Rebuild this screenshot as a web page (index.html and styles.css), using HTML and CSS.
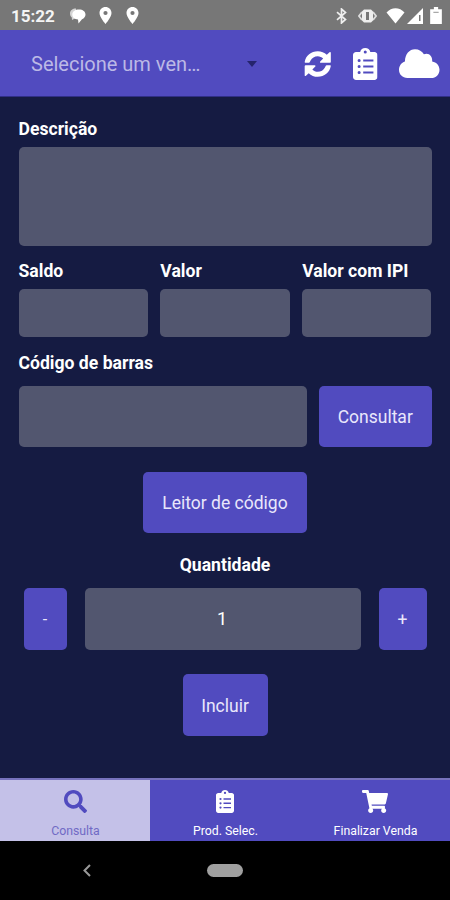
FILE: index.html
```html
<!DOCTYPE html>
<html lang="pt-BR">
<head>
<meta charset="utf-8">
<title>Consulta</title>
<link rel="stylesheet" href="styles.css">
</head>
<body>
<svg class="defs" width="0" height="0">
  <symbol id="clipboard" viewBox="0 0 384 512" preserveAspectRatio="none">
    <path fill-rule="evenodd" d="M336 64h-64c-8-38-40-64-80-64s-72 26-80 64H48C21.500 64 0 85.500 0 112v352c0 26.500 21.500 48 48 48h288c26.500 0 48-21.500 48-48V112c0-26.500-21.500-48-48-48zM192 40a24 24 0 1 1 0 48a24 24 0 1 1 0-48zM96 176a24 24 0 1 1 0 48a24 24 0 1 1 0-48zM96 272a24 24 0 1 1 0 48a24 24 0 1 1 0-48zM96 368a24 24 0 1 1 0 48a24 24 0 1 1 0-48zM160 184h160v32H160zM160 280h160v32H160zM160 376h160v32H160z"/>
  </symbol>
  <symbol id="pin" viewBox="0 0 12 17">
    <path fill-rule="evenodd" d="M6 0C2.600 0 0 2.600 0 6c0 4.200 6 11 6 11s6-6.800 6-11c0-3.400-2.600-6-6-6zM6 3.900a2.100 2.100 0 1 1 0 4.200a2.100 2.100 0 1 1 0-4.200z"/>
  </symbol>
</svg>
<div class="screen">
  <div class="status">
    <span class="clock">15:22</span>
    <svg class="chat" viewBox="0 0 16 16"><path fill="#d4d4d4" d="M6 0.500C2.500 0.500 0 2.500 0 5.500c0 2 .8 3.200 1.800 4L2 12l4-2z"/><path d="M9 1.500c3.800 0 6.500 2 6.500 5 0 2.200-1.300 3.900-3.500 4.700L8.500 15.500 8 11.500C4.500 11.300 2.300 9.300 2.300 6.500c0-3 2.900-5 6.700-5z"/></svg>
    <svg class="pin"><use href="#pin"/></svg>
    <svg class="pin pin-next"><use href="#pin"/></svg>
    <span class="spacer"></span>
    <svg class="bluetooth" viewBox="0 0 11 16"><path fill="none" stroke="#eee" stroke-width="1.700" d="M1 4.200l8.500 7.300L5.500 15V1l4 3.500L1 11.800"/></svg>
    <svg class="vibrate" viewBox="0 0 19 14"><path fill="none" stroke="#ddd" stroke-width="1.800" d="M4 3L1 7l3 4M15 3l3 4-3 4"/><path fill="#eee" fill-rule="evenodd" d="M6 .5h7l2 2v9l-2 2H6l-2-2v-9zM8 3v8h3V3z"/></svg>
    <svg class="wifi" viewBox="0 0 18 16"><path d="M0 4.500C5-1.200 13-1.200 18 4.500L9 15.500z"/></svg>
    <svg class="signal" viewBox="0 0 16 16"><path fill-rule="evenodd" d="M0 16L16 0v16zM12 7h1.500v6H12z"/></svg>
    <svg class="battery" viewBox="0 0 11 16"><path d="M3.500 0h4v2H11v14H0V2h3.500z"/><path fill="#999" d="M3 4.500h5v1H3z"/></svg>
  </div>
  <header class="header">
    <div class="select"><span>Selecione um ven…</span><i class="caret"></i></div>
    <svg class="sync" viewBox="0 0 28 28"><path d="M.7 12C1.800 5.300 7.300 1 14 1c3.600 0 6.800 1.400 9.200 3.700L26 2c.6-.6 1.300-.2 1.300.6v9.200c0 .6-.4 1-1 1h-9.200c-.8 0-1.100-.8-.6-1.400l3-3C18 6.900 16.100 6 14 6c-3.200 0-5.900 1.700-7.300 4.400L5.800 12.300c-.2.300-.4.500-.8.500H1.300c-.4 0-.7-.3-.6-.8z"/><path transform="rotate(180 14 14)" d="M.7 12C1.800 5.300 7.300 1 14 1c3.600 0 6.800 1.400 9.200 3.700L26 2c.6-.6 1.300-.2 1.300.6v9.200c0 .6-.4 1-1 1h-9.200c-.8 0-1.100-.8-.6-1.400l3-3C18 6.900 16.100 6 14 6c-3.200 0-5.900 1.700-7.300 4.400L5.800 12.300c-.2.300-.4.500-.8.500H1.300c-.4 0-.7-.3-.6-.8z"/></svg>
    <svg class="list"><use href="#clipboard"/></svg>
    <svg class="cloud" viewBox="0 0 41 29" preserveAspectRatio="none"><path d="M8.500 29C3.500 29 0 25.500 0 20.800c0-4 2.500-7.100 6-8.200C6.200 5 10.500.3 16.200.3c4 0 7.300 2 9 5C30 3.300 34 6.700 33.600 12.500 38 13.300 41 16.500 41 20.700 41 25.500 37.500 29 32.500 29z"/></svg>
  </header>
  <main class="form">
    <label class="label">Descrição</label>
    <div class="field description"></div>
    <div class="columns">
      <div><label class="label">Saldo</label><div class="field small"></div></div>
      <div><label class="label">Valor</label><div class="field small"></div></div>
      <div><label class="label">Valor com IPI</label><div class="field small"></div></div>
    </div>
    <label class="label code-label">Código de barras</label>
    <div class="code-row"><div class="field"></div><button class="button consult">Consultar</button></div>
    <button class="button reader">Leitor de código</button>
    <label class="label quantity-label">Quantidade</label>
    <div class="quantity-row">
      <button class="button minus">-</button>
      <div class="field quantity">1</div>
      <button class="button plus">+</button>
    </div>
    <button class="button include">Incluir</button>
  </main>
  <nav class="tabs">
    <div class="tab active">
      <svg class="search" viewBox="0 0 512 512"><path d="M505 442.700L405.300 343c-4.500-4.500-10.600-7-17-7H372c27.600-35.300 44-79.700 44-128C416 93.100 322.900 0 208 0S0 93.100 0 208s93.100 208 208 208c48.300 0 92.700-16.400 128-44v16.300c0 6.400 2.500 12.500 7 17l99.700 99.700c9.400 9.400 24.600 9.400 33.900 0l28.300-28.300c9.400-9.400 9.400-24.600.1-34zM208 336c-70.700 0-128-57.200-128-128 0-70.700 57.200-128 128-128 70.700 0 128 57.200 128 128 0 70.700-57.200 128-128 128z"/></svg>
      <span>Consulta</span>
    </div>
    <div class="tab">
      <svg class="tab-list"><use href="#clipboard"/></svg>
      <span>Prod. Selec.</span>
    </div>
    <div class="tab">
      <svg class="cart" viewBox="0 0 576 512" preserveAspectRatio="none"><path d="M528.120 301.319l47.273-208C578.806 78.301 567.391 64 551.990 64H159.208l-9.166-44.810C147.758 8.021 137.930 0 126.529 0H24C10.745 0 0 10.745 0 24v16c0 13.255 10.745 24 24 24h69.883l70.248 343.435C147.325 417.100 136 435.222 136 456c0 30.928 25.072 56 56 56s56-25.072 56-56c0-15.674-6.447-29.835-16.824-40h209.647C430.447 426.165 424 440.326 424 456c0 30.928 25.072 56 56 56s56-25.072 56-56c0-22.172-12.888-41.332-31.579-50.405l5.517-24.276c3.413-15.018-8.002-29.319-23.403-29.319H218.117l-6.545-32h293.145c11.206 0 20.920-7.754 23.403-18.681z"/></svg>
      <span>Finalizar Venda</span>
    </div>
  </nav>
  <div class="system">
    <svg class="back" viewBox="0 0 8 13"><path fill="none" stroke="#999" stroke-width="2" d="M7 1L1.500 6.500 7 12"/></svg>
    <span class="home"></span>
  </div>
</div>
</body>
</html>
```
FILE: styles.css
```css
* { box-sizing: border-box; }
body { margin: 0; font-family: Roboto, "Liberation Sans", sans-serif; }
svg { display: block; flex: none; fill: #fff; }
.defs { position: absolute; }
.screen { width: 450px; height: 900px; display: flex; flex-direction: column; overflow: hidden; background: #151b42; color: #fff; }

.status { height: 30px; flex: none; display: flex; align-items: center; padding: 1px 8px 0 11px; background: #777; }
.clock { width: 59px; font-size: 17px; font-weight: 700; line-height: 30px; color: #f4f4f4; }
.chat { width: 16px; height: 16px; }
.pin { width: 13px; height: 17px; margin-left: 13px; }
.pin-next { margin-left: 14px; }
.spacer { flex: 1; }
.bluetooth { width: 11px; height: 16px; }
.vibrate { width: 19px; height: 14px; margin-left: 11px; }
.wifi { width: 19px; height: 16px; margin-left: 9px; }
.signal { width: 16px; height: 16px; margin-left: 2px; }
.battery { width: 12px; height: 17px; margin-left: 7px; }

.header { height: 67px; flex: none; display: flex; align-items: center; padding: 0 10.500px 0 31px; background: #514bbf; border-bottom: 1px solid #302f86; }
.select { width: 226px; margin-right: 47px; padding-top: 2px; display: flex; align-items: center; justify-content: space-between; font-size: 20px; line-height: 24px; color: #bcb9e6; }
.caret { border: 5px solid transparent; border-top: 6px solid #25246d; border-bottom: 0; }
.sync { width: 27.500px; height: 28px; margin-top: 2px; }
.list { width: 24.500px; height: 32px; margin: 2px 0 0 21.500px; }
.cloud { width: 40.500px; height: 29px; margin: 1px 0 0 auto; }

.form { flex: 1; display: flex; flex-direction: column; padding: 22px 18.500px 0; }
.label { display: block; height: 20px; font-size: 17.600px; font-weight: 700; line-height: 20px; white-space: nowrap; }
.field { border-radius: 5px; background: #52566f; }
.description { height: 99.500px; margin-top: 7.500px; }
.columns { display: grid; grid-template-columns: repeat(3, 1fr); gap: 12.500px; margin-top: 15px; }
.small { height: 48.500px; margin-top: 7.500px; }
.code-label { margin-top: 15.500px; }
.code-row { display: flex; gap: 12.500px; height: 61px; margin-top: 13px; }
.code-row .field { flex: 1; }
.button { border: 0; padding: 0 0 1px; border-radius: 5px; background: #514bbf; color: #e9e7fb; font: 17.500px Roboto, "Liberation Sans", sans-serif; }
.consult { width: 112.500px; padding-top: 3px; }
.reader { align-self: center; width: 164px; height: 61.500px; margin-top: 25px; padding-top: 3px; }
.quantity-label { align-self: center; margin-top: 22px; }
.quantity-row { display: flex; justify-content: space-between; height: 61.500px; margin: 13px 5px 0; }
.minus { width: 43px; padding-top: 3px; font-size: 16px; }
.quantity { width: 276px; text-align: center; font-size: 18px; line-height: 62px; padding-right: 1px; }
.plus { width: 48px; padding-top: 3px; }
.include { align-self: center; width: 85px; height: 62px; margin-top: 24.500px; padding-top: 3px; }

.tabs { height: 63px; flex: none; display: grid; grid-template-columns: repeat(3, 1fr); border-top: 2px solid #7773bd; background: #514bbf; overflow: hidden; }
.tab { display: flex; flex-direction: column; align-items: center; padding-top: 10px; }
.tab svg { height: 23px; }
.tab span { margin: 11px 0 0 1px; font-size: 12.300px; line-height: 15px; white-space: nowrap; }
.active { background: #c4c1e8; color: #706ac5; }
.search { width: 23px; fill: #514bbf; }
.tab-list { width: 18px; }
.cart { width: 26px; }
.system { height: 59px; flex: none; display: flex; align-items: center; padding-left: 83px; background: #000; }
.back { width: 8px; height: 13px; }
.home { width: 36px; height: 13px; margin-left: 116px; border-radius: 7px; background: #a0a0a0; }
```
